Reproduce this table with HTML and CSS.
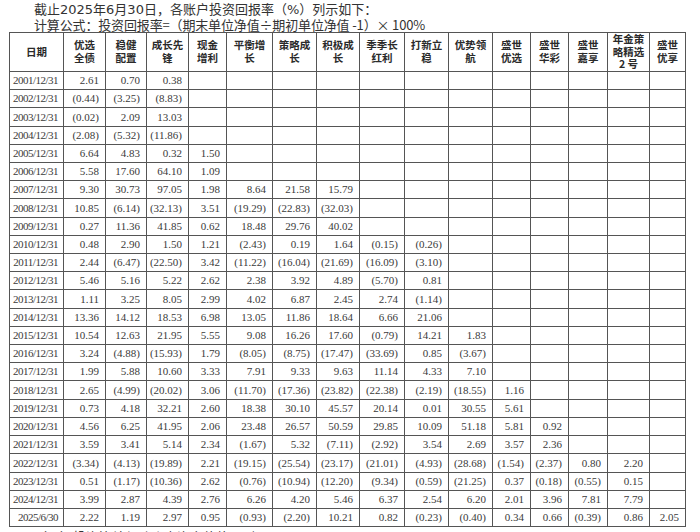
FILE: index.html
```html
<!DOCTYPE html>
<html lang="zh-CN">
<head>
<meta charset="utf-8">
<title>各账户投资回报率</title>
<link rel="stylesheet" href="styles.css">
</head>
<body>
<div class="page">
  <div class="intro">
    <p class="line first">截止2025年6月30日，各账户投资回报率（%）列示如下：</p>
    <p class="line second">计算公式：投资回报率=（期末单位净值÷期初单位净值 -1）× 100%</p>
  </div>
  <table class="returns">
    <colgroup>
      <col class="w54"><col class="w42"><col class="w41"><col class="w42"><col class="w38"><col class="w46"><col class="w44"><col class="w43"><col class="w45"><col class="w44"><col class="w44"><col class="w38"><col class="w38"><col class="w39"><col class="w42"><col class="w36">
    </colgroup>
    <thead>
      <tr>
        <th>日期</th><th>优选<br>全债</th><th>稳健<br>配置</th><th>成长先<br>锋</th><th>现金<br>增利</th><th>平衡增<br>长</th><th>策略成<br>长</th><th>积极成<br>长</th><th>季季长<br>红利</th><th>打新立<br>稳</th><th>优势领<br>航</th><th>盛世<br>优选</th><th>盛世<br>华彩</th><th>盛世<br>嘉享</th><th>年金策<br>略精选<br>2 号</th><th>盛世<br>优享</th>
      </tr>
    </thead>
    <tbody>
      <tr><td class="date">2001/12/31</td><td>2.61</td><td>0.70</td><td>0.38</td><td></td><td></td><td></td><td></td><td></td><td></td><td></td><td></td><td></td><td></td><td></td><td></td></tr>
      <tr><td class="date">2002/12/31</td><td>(0.44)</td><td>(3.25)</td><td>(8.83)</td><td></td><td></td><td></td><td></td><td></td><td></td><td></td><td></td><td></td><td></td><td></td><td></td></tr>
      <tr class="tall"><td class="date">2003/12/31</td><td>(0.02)</td><td>2.09</td><td>13.03</td><td></td><td></td><td></td><td></td><td></td><td></td><td></td><td></td><td></td><td></td><td></td><td></td></tr>
      <tr><td class="date">2004/12/31</td><td>(2.08)</td><td>(5.32)</td><td>(11.86)</td><td></td><td></td><td></td><td></td><td></td><td></td><td></td><td></td><td></td><td></td><td></td><td></td></tr>
      <tr><td class="date">2005/12/31</td><td>6.64</td><td>4.83</td><td>0.32</td><td>1.50</td><td></td><td></td><td></td><td></td><td></td><td></td><td></td><td></td><td></td><td></td><td></td></tr>
      <tr><td class="date">2006/12/31</td><td>5.58</td><td>17.60</td><td>64.10</td><td>1.09</td><td></td><td></td><td></td><td></td><td></td><td></td><td></td><td></td><td></td><td></td><td></td></tr>
      <tr><td class="date">2007/12/31</td><td>9.30</td><td>30.73</td><td>97.05</td><td>1.98</td><td>8.64</td><td>21.58</td><td>15.79</td><td></td><td></td><td></td><td></td><td></td><td></td><td></td><td></td></tr>
      <tr class="tall"><td class="date">2008/12/31</td><td>10.85</td><td>(6.14)</td><td>(32.13)</td><td>3.51</td><td>(19.29)</td><td>(22.83)</td><td>(32.03)</td><td></td><td></td><td></td><td></td><td></td><td></td><td></td><td></td></tr>
      <tr><td class="date">2009/12/31</td><td>0.27</td><td>11.36</td><td>41.85</td><td>0.62</td><td>18.48</td><td>29.76</td><td>40.02</td><td></td><td></td><td></td><td></td><td></td><td></td><td></td><td></td></tr>
      <tr><td class="date">2010/12/31</td><td>0.48</td><td>2.90</td><td>1.50</td><td>1.21</td><td>(2.43)</td><td>0.19</td><td>1.64</td><td>(0.15)</td><td>(0.26)</td><td></td><td></td><td></td><td></td><td></td><td></td></tr>
      <tr><td class="date">2011/12/31</td><td>2.44</td><td>(6.47)</td><td>(22.50)</td><td>3.42</td><td>(11.22)</td><td>(16.04)</td><td>(21.69)</td><td>(16.09)</td><td>(3.10)</td><td></td><td></td><td></td><td></td><td></td><td></td></tr>
      <tr><td class="date">2012/12/31</td><td>5.46</td><td>5.16</td><td>5.22</td><td>2.62</td><td>2.38</td><td>3.92</td><td>4.89</td><td>(5.70)</td><td>0.81</td><td></td><td></td><td></td><td></td><td></td><td></td></tr>
      <tr class="tall"><td class="date">2013/12/31</td><td>1.11</td><td>3.25</td><td>8.05</td><td>2.99</td><td>4.02</td><td>6.87</td><td>2.45</td><td>2.74</td><td>(1.14)</td><td></td><td></td><td></td><td></td><td></td><td></td></tr>
      <tr><td class="date">2014/12/31</td><td>13.36</td><td>14.12</td><td>18.53</td><td>6.98</td><td>13.05</td><td>11.86</td><td>18.64</td><td>6.66</td><td>21.06</td><td></td><td></td><td></td><td></td><td></td><td></td></tr>
      <tr><td class="date">2015/12/31</td><td>10.54</td><td>12.63</td><td>21.95</td><td>5.55</td><td>9.08</td><td>16.26</td><td>17.60</td><td>(0.79)</td><td>14.21</td><td>1.83</td><td></td><td></td><td></td><td></td><td></td></tr>
      <tr><td class="date">2016/12/31</td><td>3.24</td><td>(4.88)</td><td>(15.93)</td><td>1.79</td><td>(8.05)</td><td>(8.75)</td><td>(17.47)</td><td>(33.69)</td><td>0.85</td><td>(3.67)</td><td></td><td></td><td></td><td></td><td></td></tr>
      <tr><td class="date">2017/12/31</td><td>1.99</td><td>5.88</td><td>10.60</td><td>3.33</td><td>7.91</td><td>9.33</td><td>9.63</td><td>11.14</td><td>4.33</td><td>7.10</td><td></td><td></td><td></td><td></td><td></td></tr>
      <tr class="tall"><td class="date">2018/12/31</td><td>2.65</td><td>(4.99)</td><td>(20.02)</td><td>3.06</td><td>(11.70)</td><td>(17.36)</td><td>(23.82)</td><td>(22.38)</td><td>(2.19)</td><td>(18.55)</td><td>1.16</td><td></td><td></td><td></td><td></td></tr>
      <tr><td class="date">2019/12/31</td><td>0.73</td><td>4.18</td><td>32.21</td><td>2.60</td><td>18.38</td><td>30.10</td><td>45.57</td><td>20.14</td><td>0.01</td><td>30.55</td><td>5.61</td><td></td><td></td><td></td><td></td></tr>
      <tr><td class="date">2020/12/31</td><td>4.56</td><td>6.25</td><td>41.95</td><td>2.06</td><td>23.48</td><td>26.57</td><td>50.59</td><td>29.85</td><td>10.09</td><td>51.18</td><td>5.81</td><td>0.92</td><td></td><td></td><td></td></tr>
      <tr><td class="date">2021/12/31</td><td>3.59</td><td>3.41</td><td>5.14</td><td>2.34</td><td>(1.67)</td><td>5.32</td><td>(7.11)</td><td>(2.92)</td><td>3.54</td><td>2.69</td><td>3.57</td><td>2.36</td><td></td><td></td><td></td></tr>
      <tr class="tall"><td class="date">2022/12/31</td><td>(3.34)</td><td>(4.13)</td><td>(19.89)</td><td>2.21</td><td>(19.15)</td><td>(25.54)</td><td>(23.17)</td><td>(21.01)</td><td>(4.93)</td><td>(28.68)</td><td>(1.54)</td><td>(2.37)</td><td>0.80</td><td>2.20</td><td></td></tr>
      <tr><td class="date">2023/12/31</td><td>0.51</td><td>(1.17)</td><td>(10.36)</td><td>2.62</td><td>(0.76)</td><td>(10.94)</td><td>(12.20)</td><td>(9.34)</td><td>(0.59)</td><td>(21.25)</td><td>0.37</td><td>(0.18)</td><td>(0.55)</td><td>0.15</td><td></td></tr>
      <tr><td class="date">2024/12/31</td><td>3.99</td><td>2.87</td><td>4.39</td><td>2.76</td><td>6.26</td><td>4.20</td><td>5.46</td><td>6.37</td><td>2.54</td><td>6.20</td><td>2.01</td><td>3.96</td><td>7.81</td><td>7.79</td><td></td></tr>
      <tr><td class="date">2025/6/30</td><td>2.22</td><td>1.19</td><td>2.97</td><td>0.95</td><td>(0.93)</td><td>(2.20)</td><td>10.21</td><td>0.82</td><td>(0.23)</td><td>(0.40)</td><td>0.34</td><td>0.66</td><td>(0.39)</td><td>0.86</td><td>2.05</td></tr>
    </tbody>
  </table>
  <p class="next">（四）投资连结保险账户资产估值原则</p>
</div>
</body>
</html>
```

FILE: styles.css
```css
html, body {
  margin: 0;
  padding: 0;
  background: #ffffff;
}

body {
  font-family: "Liberation Serif", serif;
  color: #333333;
}

.page {
  padding: 2px 0 0 9px;
}

.intro {
  padding-left: 25px;
  font-size: 13px;
  line-height: 15px;
  color: #333333;
}

.line {
  margin: 0;
  white-space: nowrap;
}

.first {
  font-family: "DejaVu Sans", "Noto Sans CJK SC", sans-serif;
  text-spacing-trim: space-all;
}

.second {
  font-family: "Noto Sans CJK SC", sans-serif;
  letter-spacing: -0.15px;
}

.returns {
  border-collapse: collapse;
  table-layout: fixed;
  width: 677px;
  border: 1px solid #666666;
}

.w54 { width: 54px; }
.w46 { width: 46px; }
.w45 { width: 45px; }
.w44 { width: 44px; }
.w43 { width: 43px; }
.w42 { width: 42px; }
.w41 { width: 41px; }
.w39 { width: 39px; }
.w38 { width: 38px; }
.w36 { width: 36px; }

.returns th {
  height: 35px;
  padding: 0;
  border: 1px solid #555555;
  font-family: "Noto Sans CJK SC", sans-serif;
  font-weight: 700;
  font-size: 10.5px;
  line-height: 12.5px;
  color: #2a2a2a;
  text-align: center;
  vertical-align: middle;
}

.returns tbody tr {
  height: 18px;
}

.returns tbody tr.tall {
  height: 19px;
}

.returns td {
  padding: 0 6px 0 0;
  border: 1px solid #555555;
  font-family: "Liberation Serif", serif;
  font-size: 11px;
  line-height: 12px;
  color: #3a3a3a;
  text-align: right;
  vertical-align: middle;
  white-space: nowrap;
}

.returns td.date {
  padding-right: 5px;
  letter-spacing: -0.5px;
}

.next {
  margin: 2px 0 0 0;
  padding-left: 25px;
  font-family: "Noto Sans CJK SC", sans-serif;
  font-size: 13px;
  line-height: 15px;
  color: #333333;
}
```
